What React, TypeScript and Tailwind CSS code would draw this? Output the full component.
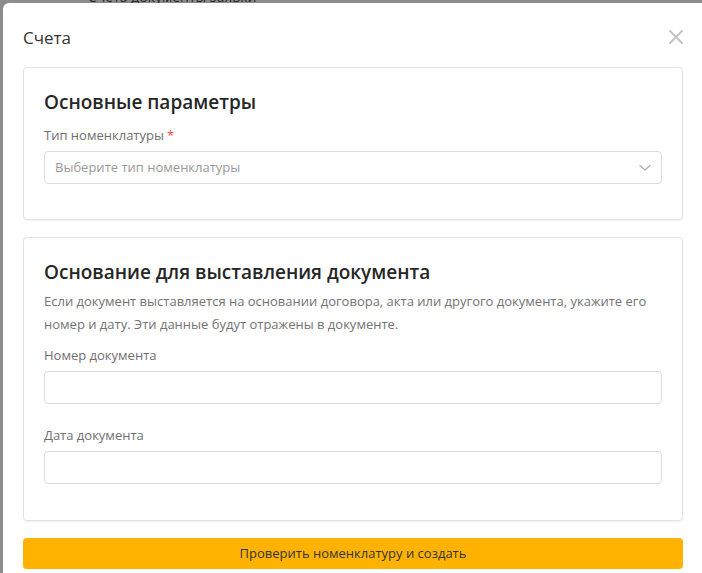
import React from "react";

const font = { fontFamily: '"Open Sans", "Noto Sans", sans-serif' };

function Field({ label, required, children }: { label: string; required?: boolean; children: React.ReactNode }) {
  return (
    <div className="flex flex-col">
      <div className="text-[13px] leading-[18px] text-[#6f6f6f] mb-[7px]">
        {label}
        {required && <span className="text-[#ef4444] ml-[3px]">*</span>}
      </div>
      {children}
    </div>
  );
}

export default function App() {
  return (
    <div className="w-[702px] h-[573px] overflow-hidden bg-[#8c8c8c] flex flex-col" style={font}>
      <div className="h-[3px] shrink-0 overflow-hidden relative">
        <div className="absolute left-[88px] top-[-11px] text-[14px] leading-[16px] text-[#2a2a2a] whitespace-nowrap">
          Счета документы заявки
        </div>
      </div>
      <div className="flex-1 ml-[3px] bg-white rounded-tl-[6px] pl-[20px] pr-[19px] flex flex-col">
        <div className="h-[64px] shrink-0 flex items-center justify-between">
          <div className="text-[17px] text-[#333] pt-[6px]">Счета</div>
          <svg width="16" height="16" viewBox="0 0 16 16" className="mr-[-1px] mt-[4px]">
            <path d="M2 2L14 14M14 2L2 14" stroke="#c4c4c4" strokeWidth="2" strokeLinecap="round" />
          </svg>
        </div>
        <div className="border border-[#e3e3e3] rounded-[4px] shadow-[0_1px_2px_rgba(0,0,0,0.06)] pl-[20px] pr-[20px] pt-[21px] pb-[35px] flex flex-col">
          <div className="text-[19px] leading-[26px] font-semibold text-[#262626] mb-[11px]">Основные параметры</div>
          <Field label="Тип номенклатуры" required>
            <div className="h-[33px] border border-[#dcdcdc] rounded-[4px] flex items-center justify-between pl-[10px] pr-[10px]">
              <span className="text-[13px] text-[#9a9a9a]">Выберите тип номенклатуры</span>
              <svg width="12" height="8" viewBox="0 0 12 8">
                <path d="M1 1.5L6 6L11 1.5" stroke="#b5b5b5" strokeWidth="1.6" fill="none" strokeLinecap="round" strokeLinejoin="round" />
              </svg>
            </div>
          </Field>
        </div>
        <div className="mt-[17px] border border-[#e3e3e3] rounded-[4px] shadow-[0_1px_2px_rgba(0,0,0,0.06)] pl-[20px] pr-[20px] pt-[21px] pb-[36px] flex flex-col">
          <div className="text-[19px] leading-[26px] font-semibold text-[#262626] mb-[5px]">Основание для выставления документа</div>
          <div className="text-[13px] leading-[23px] text-[#737373] mb-[10px]">
            Если документ выставляется на основании договора, акта или другого документа, укажите его номер и дату. Эти данные будут отражены в документе.
          </div>
          <Field label="Номер документа">
            <div className="h-[33px] border border-[#dcdcdc] rounded-[4px]" />
          </Field>
          <div className="h-[22px]" />
          <Field label="Дата документа">
            <div className="h-[33px] border border-[#dcdcdc] rounded-[4px]" />
          </Field>
        </div>
        <button className="mt-[17px] h-[31px] bg-[#ffb300] rounded-[4px] text-[13px] text-[#333] flex items-center justify-center">
          Проверить номенклатуру и создать
        </button>
      </div>
    </div>
  );
}
